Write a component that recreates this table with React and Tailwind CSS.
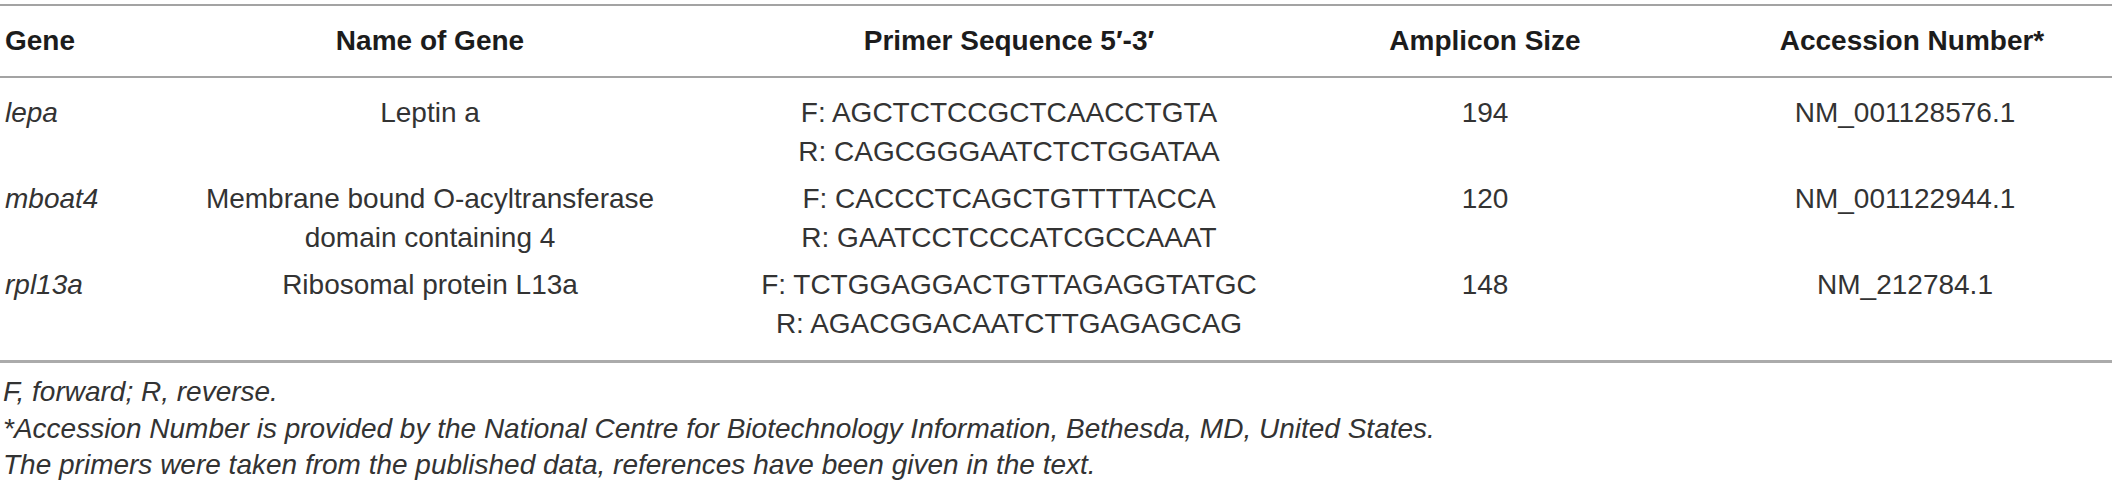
import React from 'react';

const rows = [
    {
        gene: 'lepa',
        name: ['Leptin a'],
        primers: ['F: AGCTCTCCGCTCAACCTGTA', 'R: CAGCGGGAATCTCTGGATAA'],
        size: '194',
        accession: 'NM_001128576.1',
        pad: 'pt-[15px]',
    },
    {
        gene: 'mboat4',
        name: ['Membrane bound O-acyltransferase', 'domain containing 4'],
        primers: ['F: CACCCTCAGCTGTTTTACCA', 'R: GAATCCTCCCATCGCCAAAT'],
        size: '120',
        accession: 'NM_001122944.1',
        pad: 'pt-[8px]',
    },
    {
        gene: 'rpl13a',
        name: ['Ribosomal protein L13a'],
        primers: ['F: TCTGGAGGACTGTTAGAGGTATGC', 'R: AGACGGACAATCTTGAGAGCAG'],
        size: '148',
        accession: 'NM_212784.1',
        pad: 'pt-[8px]',
    },
];

const cols = 'grid grid-cols-[200px_460px_698px_254px_500px] whitespace-nowrap';

const App = () => {
    return (
        <div className="w-[2118px] h-[484px] bg-white text-[#333333] font-['Liberation_Sans',Arial,sans-serif] text-[28px]">
            {/* Table */}
            <div className="w-[2112px] pt-[4px]">
                <div className="border-t-2 border-[#a3a3a3]" />
                <div className={`${cols} h-[70px] items-center font-bold text-[#1c1c1c]`}>
                    <div className="pl-[5px]">Gene</div>
                    <div className="text-center">Name of Gene</div>
                    <div className="text-center">Primer Sequence 5′-3′</div>
                    <div className="text-center">Amplicon Size</div>
                    <div className="text-center pl-[100px]">Accession Number*</div>
                </div>
                <div className="border-t-2 border-[#a3a3a3]" />
                {rows.map((r) => (
                    <div key={r.gene} className={`${cols} ${r.pad} leading-[39px]`}>
                        <div className="pl-[5px] italic">{r.gene}</div>
                        <div className="text-center">
                            {r.name.map((n) => (
                                <div key={n}>{n}</div>
                            ))}
                        </div>
                        <div className="text-center">
                            {r.primers.map((p) => (
                                <div key={p}>{p}</div>
                            ))}
                        </div>
                        <div className="text-center">{r.size}</div>
                        <div className="text-center pl-[86px]">{r.accession}</div>
                    </div>
                ))}
                <div className="mt-[17px] border-t-[3px] border-[#ababab]" />
            </div>
            {/* Footnotes */}
            <div className="pt-[11px] pl-[3px] italic leading-[36.5px]">
                <p>F, forward; R, reverse.</p>
                <p>*Accession Number is provided by the National Centre for Biotechnology Information, Bethesda, MD, United States.</p>
                <p>The primers were taken from the published data, references have been given in the text.</p>
            </div>
        </div>
    );
};

export default App;
